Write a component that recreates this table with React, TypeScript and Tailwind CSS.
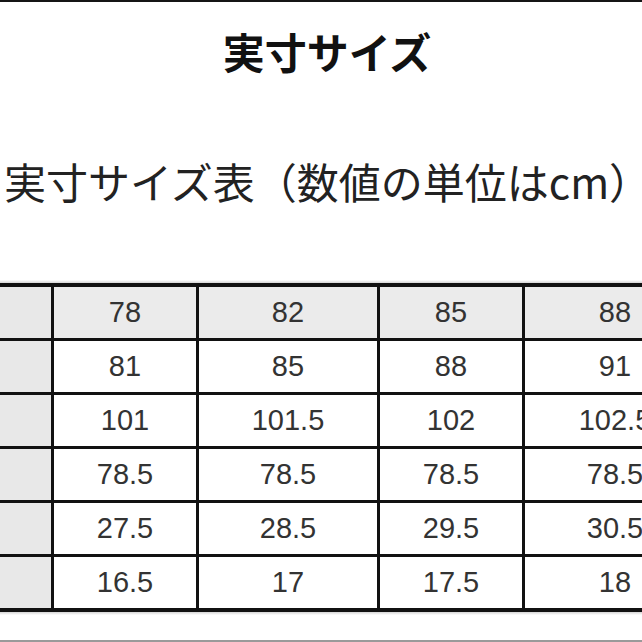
const cols = ["w-[51px]", "w-[142px]", "w-[178px]", "w-[142px]", "w-[180px]"];

const rows: string[][] = [
  ["78", "82", "85", "88"],
  ["81", "85", "88", "91"],
  ["101", "101.5", "102", "102.5"],
  ["78.5", "78.5", "78.5", "78.5"],
  ["27.5", "28.5", "29.5", "30.5"],
  ["16.5", "17", "17.5", "18"],
];

export default function App() {
  return (
    <div className="relative h-[642px] w-[642px] overflow-hidden bg-white font-['Noto_Sans_CJK_JP',sans-serif]">
      <div className="h-[2px] bg-[#151515]" />
      <h1 className="mt-[28px] pl-[12px] text-center text-[42px] font-bold leading-none text-[#111]">
        実寸サイズ
      </h1>
      <p className="mt-[88px] pl-[4px] text-[42px] leading-none whitespace-nowrap text-[#222]">
        実寸サイズ表（数値の単位はcm）
      </p>
      <div className="mt-[78px] h-[3px] bg-gradient-to-b from-white to-[#d4d4d4]" />
      <div className="flex flex-col gap-[3px] border-y-4 border-[#111] bg-[#111]">
        {rows.map((r, i) => (
          <div key={i} className="flex h-[51px] gap-[3px]">
            <div className={`${cols[0]} shrink-0 bg-[#e8e8e8]`} />
            {r.map((v, j) => (
              <div
                key={j}
                className={`${cols[j + 1]} flex shrink-0 items-center justify-center font-['Liberation_Sans',sans-serif] text-[29px] text-[#333] ${
                  i === 0 ? "bg-[#ebebeb]" : "bg-white"
                }`}
              >
                {v}
              </div>
            ))}
          </div>
        ))}
      </div>
      <div className="h-[3px] bg-gradient-to-b from-[#d4d4d4] to-white" />
      <div className="absolute bottom-0 left-0 h-[2px] w-full bg-[#9a9a9a]" />
    </div>
  );
}
